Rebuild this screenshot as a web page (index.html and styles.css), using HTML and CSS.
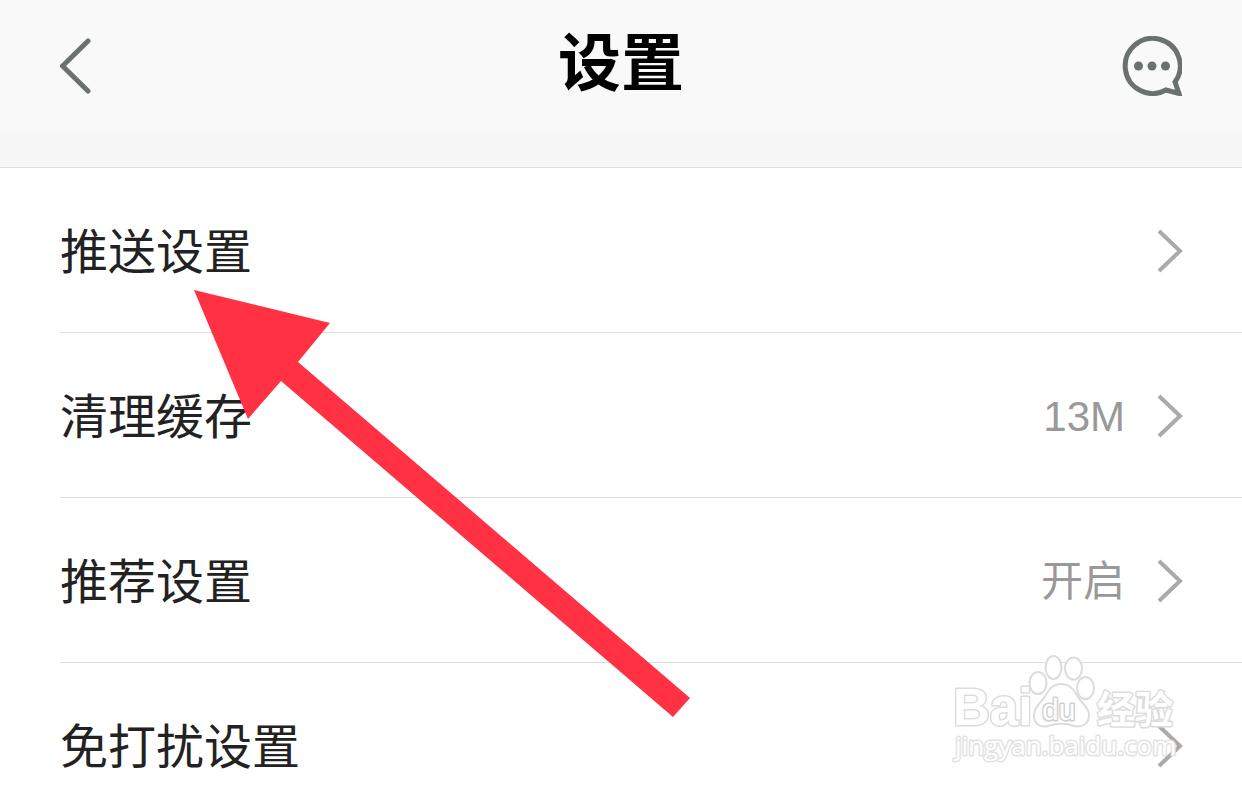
FILE: index.html
```html
<!DOCTYPE html>
<html lang="zh-CN">
<head>
<meta charset="utf-8">
<meta name="viewport" content="width=device-width, initial-scale=1">
<title>设置</title>
<link rel="stylesheet" href="styles.css">
</head>
<body>
<div class="app">
  <header class="header">
    <button class="icon-button" type="button" aria-label="返回">
      <svg class="icon-back" viewBox="0 0 32 56" aria-hidden="true"><path d="M28 3 2.500 28 28 53"/></svg>
    </button>
    <h1 class="title">设置</h1>
    <button class="icon-button icon-button-end" type="button" aria-label="消息">
      <svg class="icon-chat" viewBox="0 0 60 60" aria-hidden="true">
        <path d="M53 46A27.500 27.500 0 1 0 44 54L57 57.500Z"/>
        <circle cx="16.500" cy="30" r="4.500"/><circle cx="30" cy="30" r="4.500"/><circle cx="43.500" cy="30" r="4.500"/>
      </svg>
    </button>
  </header>
  <div class="spacer"></div>
  <main>
    <ul class="list">
      <li class="item"><a class="row" href="#push"><span class="label">推送设置</span><svg class="chevron" viewBox="0 0 26 44" aria-hidden="true"><path d="M2 2 23 22 2 42"/></svg></a></li>
      <li class="item"><a class="row" href="#cache"><span class="label">清理缓存</span><span class="value">13M</span><svg class="chevron" viewBox="0 0 26 44" aria-hidden="true"><path d="M2 2 23 22 2 42"/></svg></a></li>
      <li class="item"><a class="row" href="#recommend"><span class="label">推荐设置</span><span class="value">开启</span><svg class="chevron" viewBox="0 0 26 44" aria-hidden="true"><path d="M2 2 23 22 2 42"/></svg></a></li>
      <li class="item"><a class="row" href="#quiet"><span class="label">免打扰设置</span><svg class="chevron" viewBox="0 0 26 44" aria-hidden="true"><path d="M2 2 23 22 2 42"/></svg></a></li>
    </ul>
  </main>
  <svg class="arrow" viewBox="0 0 500 430" aria-hidden="true"><path d="M4 0 140 33 108 72 500 408 483 427 91 91 58 129Z"/></svg>
  <svg class="watermark" viewBox="0 0 230 120" role="img" aria-label="Baidu 经验 jingyan.baidu.com">
    <g class="mark">
      <text class="mark-brand" x="1" y="75">Bai</text>
      <ellipse cx="86" cy="33" rx="8.500" ry="11"/>
      <ellipse cx="101.500" cy="17.500" rx="8" ry="11.500"/>
      <ellipse cx="121.500" cy="18.500" rx="8.500" ry="11"/>
      <ellipse cx="133.500" cy="38" rx="8.500" ry="11"/>
      <path d="M109 34C100 34 96 41 92 48 87 54 82 58 82 66 82 74 89 78 96 76 105 73 114 73 122 76 131 78 137 73 137 65 137 57 130 54 126 47 122 40 118 34 109 34Z"/>
      <text class="mark-du" x="90" y="70">du</text>
      <text class="mark-cn" x="145" y="73">经验</text>
      <text class="mark-url" x="3" y="105">jingyan.baidu.com</text>
    </g>
  </svg>
</div>
</body>
</html>
```
FILE: styles.css
```css
* { box-sizing: border-box; }

body {
  margin: 0;
  background: #fff;
  color: #222;
  font-family: "Liberation Sans", "Noto Sans CJK SC", sans-serif;
}

.app {
  position: relative;
  height: 100vh;
  overflow: hidden;
}

.header {
  display: grid;
  grid-template-columns: 1fr auto 1fr;
  align-items: center;
  height: 132px;
  padding: 0 60px;
  background: #f9f9f9;
}

.title {
  margin: 0;
  padding-bottom: 6px;
  color: #000;
  font-size: 63px;
  font-weight: 700;
  line-height: 80px;
}

.icon-button {
  display: flex;
  justify-self: start;
  padding: 0;
  border: 0;
  background: none;
}

.icon-button-end { justify-self: end; }

.icon-back {
  width: 32px;
  height: 56px;
  fill: none;
  stroke: #6b7071;
  stroke-width: 5;
  stroke-linecap: round;
}

.icon-chat { width: 60px; height: 60px; }
.icon-chat path { fill: none; stroke: #6b7071; stroke-width: 5; }
.icon-chat circle { fill: #6b7071; }

.spacer {
  height: 36px;
  border-bottom: 1px solid #ddd;
  background: #f7f7f7;
}

.list {
  margin: 0;
  padding: 0 0 0 60px;
  list-style: none;
}

.item { border-bottom: 1px solid #ddd; }

.row {
  display: flex;
  align-items: center;
  gap: 32px;
  height: 164px;
  padding: 2px 59px 0 0;
  color: inherit;
  text-decoration: none;
}

.label {
  flex: 1;
  padding-top: 4px;
  font-size: 48px;
  line-height: 64px;
}

.value {
  padding-top: 2px;
  color: #999;
  font-size: 42px;
  line-height: 56px;
}

.chevron {
  width: 26px;
  height: 44px;
  fill: none;
  stroke: #aaa;
  stroke-width: 4;
}

.arrow {
  position: absolute;
  top: 290px;
  left: 190px;
  width: 500px;
  height: 430px;
  fill: #ff3143;
  pointer-events: none;
}

.watermark {
  position: absolute;
  right: 60px;
  top: 650px;
  width: 230px;
  height: 120px;
  pointer-events: none;
}

.mark {
  fill: #fff;
  stroke: #dcdcdc;
  stroke-width: 2;
}

.mark text {
  stroke-width: 3;
  stroke-linejoin: round;
  paint-order: stroke;
}

.mark-brand { font-size: 51px; font-weight: 700; }
.mark-du { font-size: 30px; stroke: #d0d0d0; }
.mark-cn { font-size: 38px; font-weight: 700; }
.mark-url { font-family: "Open Sans", sans-serif; font-size: 26px; stroke: #e2e2e2; }
```
